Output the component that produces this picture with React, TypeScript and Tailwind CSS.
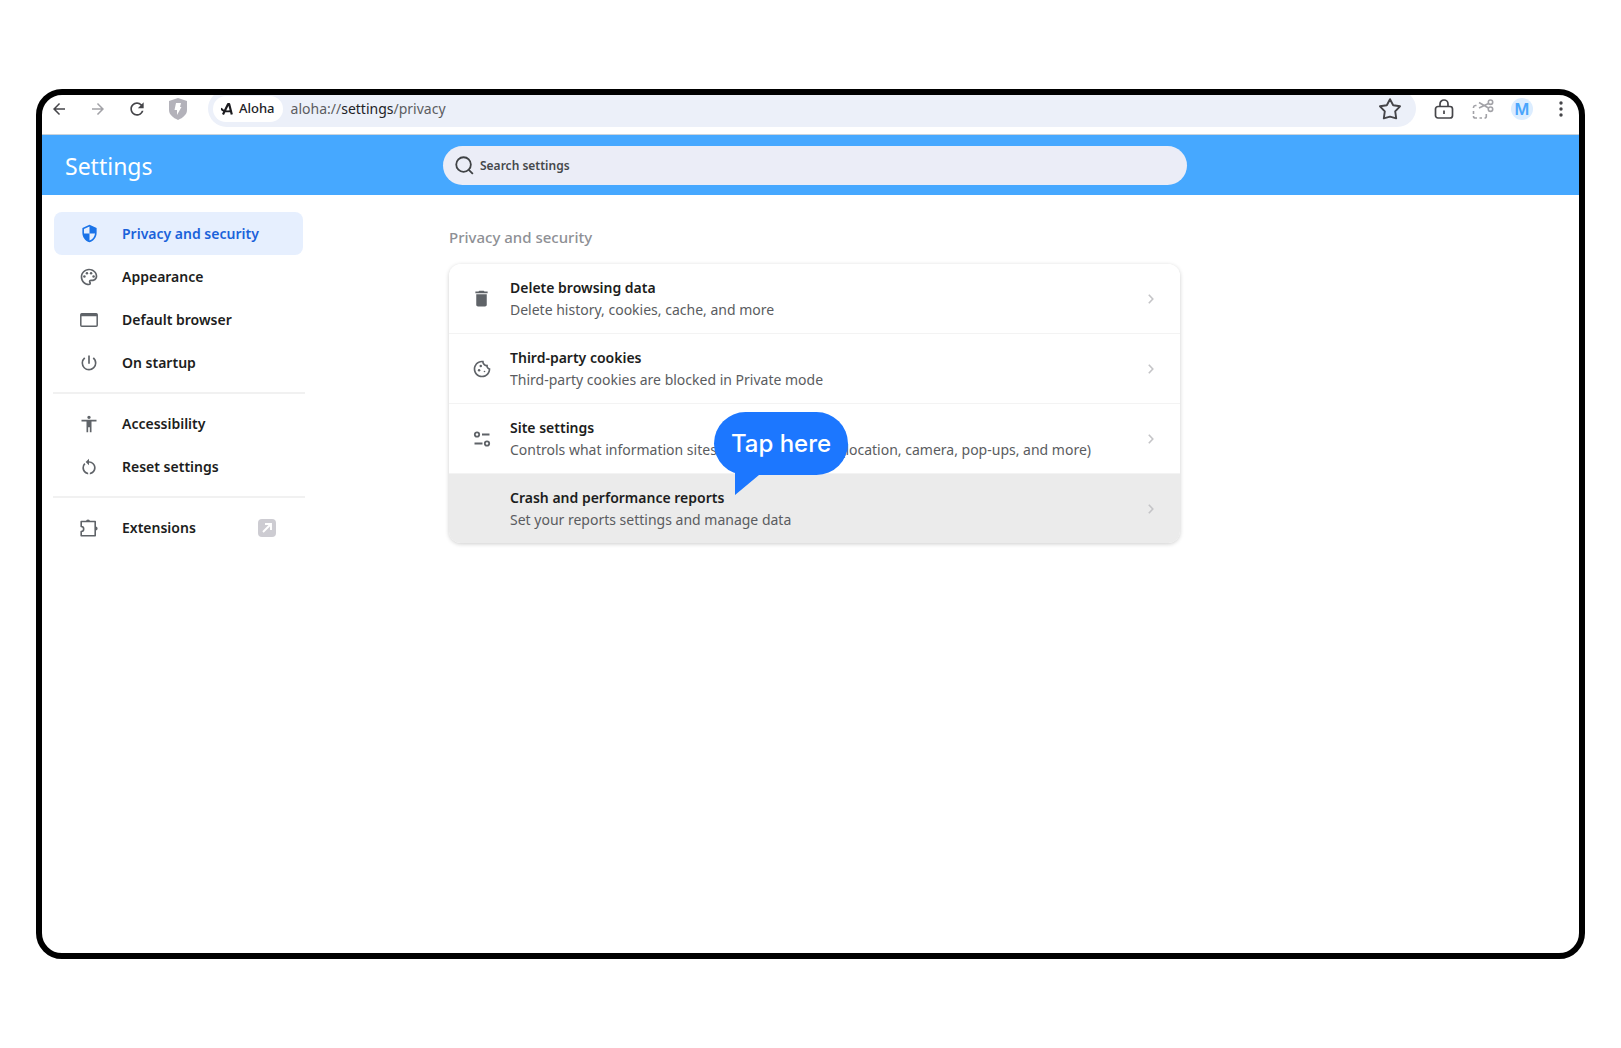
import type { ReactNode } from "react";
import {
  MdAccessibility,
  MdArrowBack,
  MdArrowForward,
  MdDelete,
  MdOutlineCookie,
  MdOutlinePalette,
  MdPowerSettingsNew,
  MdRefresh,
  MdRestartAlt,
  MdSecurity,
} from "react-icons/md";

function ShieldBolt() {
  return (
    <svg width="18" height="22" viewBox="0 0 18 22" aria-hidden="true">
      <path d="M9 0 18 3v9c0 4.500-4 7.800-9 10C4 19.800 0 16.500 0 12V3z" fill="#b3b2ba" />
      <path d="M7 5h5l-1 4h1.500L8 17V12H5.500z" fill="#fff" />
    </svg>
  );
}

function AlohaLogo() {
  return (
    <svg width="12" height="12" viewBox="0 0 12 12" fill="none" stroke="#1b1b1f" aria-hidden="true">
      <path d="M2 11.500 7 1.200h1.200L10.800 11.500" strokeWidth="2.200" strokeLinejoin="round" />
      <path d="M0 5.200c1 2.600 4 3.600 9.500 3" strokeWidth="1.900" />
    </svg>
  );
}

function StarIcon() {
  return (
    <svg width="22" height="22" viewBox="0 0 22 22" fill="none" stroke="#454549" strokeWidth="1.900" strokeLinejoin="round" aria-hidden="true">
      <path d="M11 1.200 14.200 7.200 21 8.300 16.200 13.300 17.200 20.400 11 18.600 4.800 20.400 5.800 13.300 1 8.300 7.800 7.200z" />
    </svg>
  );
}

function LockIcon() {
  return (
    <svg width="20" height="20" viewBox="0 0 20 20" fill="none" stroke="#454549" strokeWidth="1.700" aria-hidden="true">
      <rect x="1.500" y="7.500" width="17" height="11.500" rx="2.500" />
      <path d="M6 7.500V5a4 4 0 0 1 8 0v2.500M10 11.500v3.500" />
    </svg>
  );
}

function ScissorsIcon() {
  return (
    <svg width="22" height="20" viewBox="0 0 22 20" fill="none" stroke="#a2a2a7" strokeWidth="1.600" aria-hidden="true">
      <circle cx="18.500" cy="3.200" r="2.200" />
      <circle cx="18.500" cy="10.200" r="2.200" />
      <path d="M16.500 4.500 7 9M16.500 9 7 3.500" />
      <path d="M4.500 6.500H3.300A2 2 0 0 0 1.500 8.300V9M1.500 12v3M1.500 17v.200A1.800 1.800 0 0 0 3.300 19H5M7.500 19H10M12.500 19h.300a1.500 1.500 0 0 0 1.500-1.500V15" />
    </svg>
  );
}

function DotsIcon() {
  return (
    <svg width="4" height="16" viewBox="0 0 4 16" fill="#454549" aria-hidden="true">
      <circle cx="2" cy="2" r="1.700" />
      <circle cx="2" cy="8" r="1.700" />
      <circle cx="2" cy="14" r="1.700" />
    </svg>
  );
}

function SearchIcon() {
  return (
    <svg width="19" height="19" viewBox="0 0 20 20" fill="none" stroke="#3f4245" strokeWidth="1.900" aria-hidden="true">
      <circle cx="9" cy="9" r="7.700" />
      <path d="m14.500 14.500 4.300 4.300" />
    </svg>
  );
}

function ChevronIcon() {
  return (
    <svg width="6" height="10" viewBox="0 0 6 10" fill="none" stroke="#c4c4c7" strokeWidth="1.600" aria-hidden="true">
      <path d="m.8.8 4 4.200-4 4.200" />
    </svg>
  );
}

function WindowIcon() {
  return (
    <svg width="18" height="14" viewBox="0 0 18 14" fill="none" stroke="#5f6368" aria-hidden="true">
      <rect x=".8" y=".8" width="16.400" height="12.400" rx="1" strokeWidth="1.500" />
      <path d="M1 2h16" strokeWidth="2.500" />
    </svg>
  );
}

function PuzzleIcon() {
  return (
    <svg width="18" height="18" viewBox="0 0 18 18" fill="none" stroke="#5f6368" strokeWidth="1.600" strokeLinejoin="round" aria-hidden="true">
      <path d="M1.200 2.500h14v14.300h-14v-4.300a2.500 2.500 0 0 0 0-5z" />
      <path d="M6 2.500a2 2 0 0 1 4 0zM15.600 7.500a2 2 0 0 1 0 4z" fill="#5f6368" stroke="none" />
    </svg>
  );
}

function TuneIcon() {
  return (
    <svg width="18" height="18" viewBox="0 0 18 18" fill="none" stroke="#5f6368" strokeWidth="1.800" aria-hidden="true">
      <circle cx="4" cy="4.500" r="2.200" />
      <circle cx="14" cy="13.500" r="2.200" />
      <path d="M9 4.500h7.500M1.500 13.500H9.500" />
    </svg>
  );
}

function ExternalIcon() {
  return (
    <svg width="18" height="18" viewBox="0 0 18 18" aria-hidden="true">
      <rect width="18" height="18" rx="4" fill="#cdccd2" />
      <path d="M5 13 13 5M7 5h6v6" fill="none" stroke="#fff" strokeWidth="1.900" />
    </svg>
  );
}

type NavItem = { label: string; icon: ReactNode; active?: boolean; external?: boolean };

const navGroups: NavItem[][] = [
  [
    { label: "Privacy and security", icon: <MdSecurity size={19} />, active: true },
    { label: "Appearance", icon: <MdOutlinePalette size={20} /> },
    { label: "Default browser", icon: <WindowIcon /> },
    { label: "On startup", icon: <MdPowerSettingsNew size={20} /> },
  ],
  [
    { label: "Accessibility", icon: <MdAccessibility size={20} /> },
    { label: "Reset settings", icon: <MdRestartAlt size={20} /> },
  ],
  [{ label: "Extensions", icon: <PuzzleIcon />, external: true }],
];

const rows = [
  { title: "Delete browsing data", text: "Delete history, cookies, cache, and more", icon: <MdDelete size={21} /> },
  { title: "Third-party cookies", text: "Third-party cookies are blocked in Private mode", icon: <MdOutlineCookie size={20} /> },
  {
    title: "Site settings",
    text: "Controls what information sites can use and show (location, camera, pop-ups, and more)",
    icon: <TuneIcon />,
  },
  { title: "Crash and performance reports", text: "Set your reports settings and manage data", icon: null, hovered: true },
];

function Toolbar() {
  return (
    <div className="-mt-[5px] flex h-[45px] items-center border-b border-[#c9d3dc] pb-[7px] pl-2 pr-4 text-[#454549]">
      <button aria-label="Back" className="flex w-[18px] justify-center">
        <MdArrowBack size={18} />
      </button>
      <button aria-label="Forward" className="ml-[21px] flex w-[18px] justify-center text-[#a2a2a7]">
        <MdArrowForward size={18} />
      </button>
      <button aria-label="Reload" className="ml-5 flex w-5 justify-center">
        <MdRefresh size={20} />
      </button>
      <button aria-label="Shields" className="ml-[22px]">
        <ShieldBolt />
      </button>
      <div className="ml-[21px] flex h-full flex-1 items-center rounded-full bg-[#ecf0f9] pl-[5px] pr-[15px]">
        <span className="flex h-[26px] items-center gap-1.5 rounded-full bg-white px-2 text-[13px] font-medium text-[#222226]">
          <AlohaLogo />
          Aloha
        </span>
        <span className="ml-2 flex-1 text-sm text-[#5c5d61]">
          aloha://<span className="text-[#222226]">settings</span>/privacy
        </span>
        <button aria-label="Bookmark">
          <StarIcon />
        </button>
      </div>
      <button aria-label="Passwords" className="ml-[18px]">
        <LockIcon />
      </button>
      <button aria-label="Screenshot" className="ml-[18px]">
        <ScissorsIcon />
      </button>
      <button
        aria-label="Profile"
        className="ml-[17px] flex size-[22px] items-center justify-center rounded-full bg-[#dcedff] font-['Inter',sans-serif] text-base font-semibold text-[#4aa5fc]"
      >
        M
      </button>
      <button aria-label="Menu" className="ml-[26px]">
        <DotsIcon />
      </button>
    </div>
  );
}

function Sidebar() {
  return (
    <nav aria-label="Settings" className="w-[252px] shrink-0">
      {navGroups.map((group, index) => (
        <ul key={index} className={index > 0 ? "mt-2 border-t-2 border-[#f1f1f1] pt-2" : ""}>
          {group.map((item) => (
            <li key={item.label}>
              <a
                href="#"
                className={
                  item.active
                    ? "ml-px mr-0.5 flex h-[43px] items-center rounded-lg bg-[#e6effe] pl-[25px] pr-[27px] text-sm font-semibold text-[#1a62da]"
                    : "ml-px mr-0.5 flex h-[43px] items-center rounded-lg pl-[25px] pr-[27px] text-sm font-semibold text-[#1c1d20]"
                }
              >
                <span className={item.active ? "flex w-5 justify-center text-[#1a73e8]" : "flex w-5 justify-center text-[#5f6368]"}>
                  {item.icon}
                </span>
                <span className="ml-[23px] flex-1">{item.label}</span>
                {item.external && <ExternalIcon />}
              </a>
            </li>
          ))}
        </ul>
      ))}
    </nav>
  );
}

function TapBubble() {
  return (
    <div className="pointer-events-none absolute left-[265px] top-[148px] font-['Inter',sans-serif]">
      <div className="flex h-[63px] w-[134px] items-center justify-center rounded-full bg-[#1c77ff] text-2xl font-medium text-white">
        Tap here
      </div>
      <svg width="34" height="26" viewBox="0 0 34 26" className="absolute left-[21px] top-[57px]" aria-hidden="true">
        <path d="M0 0h34v2L24 6 0 26z" fill="#1c77ff" />
      </svg>
    </div>
  );
}

export default function App() {
  return (
    <div className="min-h-screen bg-white px-9 pb-[89px] pt-[89px] font-['Noto_Sans','Open_Sans',sans-serif]">
      <div className="min-h-[870px] overflow-hidden rounded-[26px] border-6 border-black bg-white">
        <Toolbar />
        <header className="flex h-[60px] items-center bg-[#46a8ff]">
          <h1 className="w-[401px] shrink-0 pl-[23px] pt-0.5 text-[23px] text-white">Settings</h1>
          <label className="flex h-[39px] max-w-[744px] flex-1 items-center gap-1.5 rounded-full bg-[#ebedf7] pl-3 pr-4">
            <SearchIcon />
            <input
              type="search"
              aria-label="Search settings"
              placeholder="Search settings"
              className="min-w-0 flex-1 bg-transparent pt-0.5 text-xs font-semibold outline-none placeholder:text-[#45484b]"
            />
          </label>
        </header>
        <div className="flex px-[11px] pt-[17px]">
          <Sidebar />
          <main className="ml-36 max-w-[731px] flex-1 pt-3.5">
            <h2 className="text-[15px] font-medium leading-[22px] text-[#8e9095]">Privacy and security</h2>
            <div className="relative mt-4">
              <ul className="overflow-hidden rounded-xl shadow-[0_1px_4px_rgba(0,0,0,0.2)]">
                {rows.map((row) => (
                  <li key={row.title} className="border-t border-[#f3f3f3] first:border-t-0">
                    <button
                      className={
                        row.hovered
                          ? "flex h-[69px] w-full items-center bg-[#ebebeb] pl-[22px] pr-[26px] text-left"
                          : "flex h-[69px] w-full items-center bg-white pl-[22px] pr-[26px] text-left"
                      }
                    >
                      <span className="flex w-[21px] justify-center text-[#5f6368]">{row.icon}</span>
                      <span className="ml-[18px] flex-1 whitespace-nowrap text-sm leading-[22px]">
                        <span className="block font-semibold text-[#1c1d20]">{row.title}</span>
                        <span className="block text-[#5a5c60]">{row.text}</span>
                      </span>
                      <ChevronIcon />
                    </button>
                  </li>
                ))}
              </ul>
              <TapBubble />
            </div>
          </main>
        </div>
      </div>
    </div>
  );
}
